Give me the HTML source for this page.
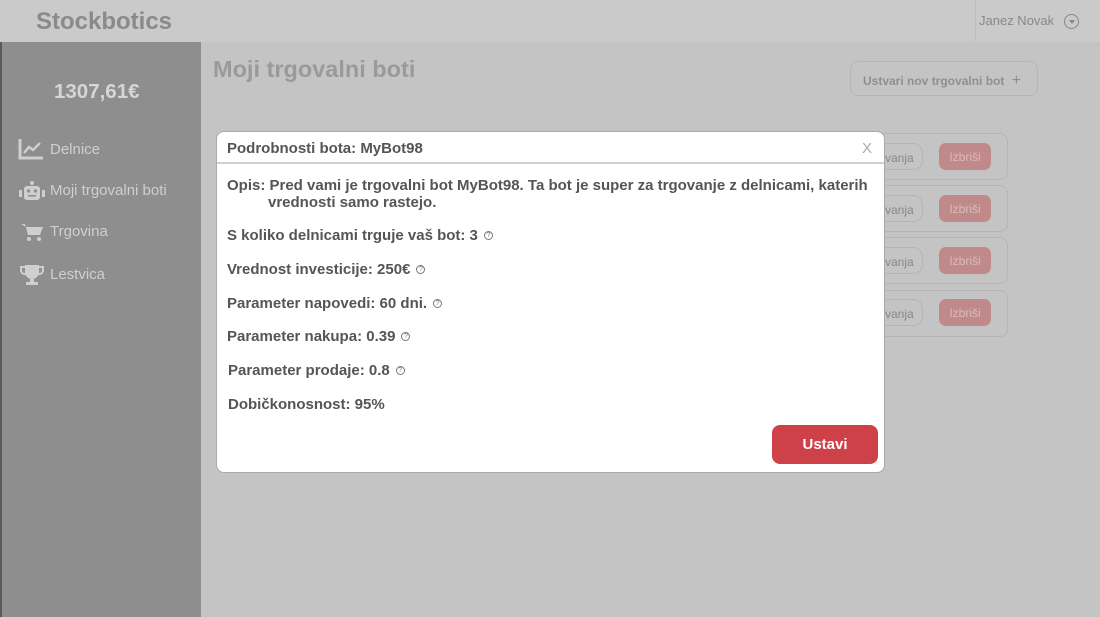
<!DOCTYPE html>
<html><head><meta charset="utf-8"><style>
*{margin:0;padding:0;box-sizing:border-box}
body{width:1100px;height:617px;overflow:hidden;background:#c4c4c4;font-family:"Liberation Sans",sans-serif;position:relative}
.abs{position:absolute}
.hdr{left:0;top:0;width:1100px;height:42px;background:#cacaca}
.logo{left:36px;top:8px;font-size:24px;font-weight:bold;color:#8a8a8a}
.user{left:979px;top:13px;font-size:13px;color:#888}
.side{left:0;top:42px;width:201px;height:575px;background:#8e8e8e;border-left:2px solid #5a5a5a}
.bal{left:54px;top:80px;font-size:20.5px;font-weight:bold;color:#d6d6d6}
.nav{left:50px;font-size:15px;color:#cfcfcf}
.ttl{left:213px;top:56px;font-size:23.5px;font-weight:bold;color:#9a9a9a}
.newb{left:850px;top:61px;width:188px;height:35px;border:1px solid #b5b5b5;border-radius:8px;font-size:12px;font-weight:bold;color:#8f8f8f;padding:10px 0 0 12px}
.card{left:868px;width:140px;height:47px;border:1px solid #b5b5b5;border-radius:8px}
.ob{left:868px;width:55px;height:27px;border:1px solid #b5b5b5;border-radius:10px;font-size:12px;color:#888;padding:7px 0 0 16px}
.iz{left:939px;width:52px;height:27px;background:#c08a8a;border-radius:7px;font-size:12px;color:#dcbcbc;text-align:center;padding-top:7px}
.modal{left:216px;top:131px;width:669px;height:342px;background:#fff;border-radius:8px;border:1px solid #aaa}
.mh{left:0;top:0;width:667px;height:32px;border-bottom:2px solid #cfcfcf}
.mt{color:#555;font-size:15px;font-weight:bold}
.q{display:inline-block;width:9px;height:9px;border:1px solid #777;border-radius:50%;font-size:7px;line-height:8px;text-align:center;color:#777;margin-left:6px;vertical-align:3px;font-weight:normal}
.btn{left:555px;top:293px;width:106px;height:39px;background:#cf4149;border-radius:8px;color:#fff;font-weight:bold;font-size:15px;text-align:center;padding-top:11px}
</style></head><body>
<div class="abs hdr"></div>
<div class="abs logo">Stockbotics</div>
<div class="abs" style="left:975px;top:0;width:1px;height:42px;background:#c0c0c0"></div>
<div class="abs user">Janez Novak</div>
<div class="abs" style="left:1064px;top:14px;width:15px;height:15px;border:1px solid #888;border-radius:50%"><div style="margin:5px auto 0;width:0;height:0;border-left:3px solid transparent;border-right:3px solid transparent;border-top:4px solid #888"></div></div>
<div class="abs side"></div>
<div class="abs bal">1307,61€</div>
<svg class="abs" style="left:18px;top:138px" width="26" height="22" viewBox="0 0 26 22"><path d="M2 1V20H25" stroke="#cfcfcf" stroke-width="3" fill="none"/><path d="M6 15L11 9L15 12L22 5" stroke="#cfcfcf" stroke-width="2.5" fill="none"/></svg>
<div class="abs nav" style="top:141px">Delnice</div>
<svg class="abs" style="left:18px;top:180px" width="28" height="22" viewBox="0 0 28 22"><rect x="6" y="6" width="16" height="14" rx="3" fill="#cfcfcf"/><rect x="1" y="10" width="3" height="7" fill="#cfcfcf"/><rect x="24" y="10" width="3" height="7" fill="#cfcfcf"/><circle cx="14" cy="3" r="2" fill="#cfcfcf"/><circle cx="10.5" cy="11" r="1.6" fill="#8e8e8e"/><circle cx="17.5" cy="11" r="1.6" fill="#8e8e8e"/><rect x="10" y="15" width="8" height="1.5" fill="#8e8e8e"/></svg>
<div class="abs nav" style="top:182px">Moji trgovalni boti</div>
<svg class="abs" style="left:20px;top:222px" width="24" height="20" viewBox="0 0 24 20"><path d="M1 2H5L8 13H20L23 5H6" fill="#cfcfcf"/><circle cx="9" cy="17" r="2" fill="#cfcfcf"/><circle cx="19" cy="17" r="2" fill="#cfcfcf"/></svg>
<div class="abs nav" style="top:223px">Trgovina</div>
<svg class="abs" style="left:20px;top:264px" width="24" height="22" viewBox="0 0 24 22"><path d="M5 1H19V8A7 7 0 0 1 5 8Z" fill="#cfcfcf"/><path d="M5 3H1V6A4 4 0 0 0 6 10M19 3H23V6A4 4 0 0 1 18 10" stroke="#cfcfcf" stroke-width="2" fill="none"/><rect x="10" y="14" width="4" height="4" fill="#cfcfcf"/><rect x="6" y="18" width="12" height="3" fill="#cfcfcf"/></svg>
<div class="abs nav" style="top:266px">Lestvica</div>
<div class="abs ttl">Moji trgovalni boti</div>
<div class="abs newb">Ustvari nov trgovalni bot <span style="font-size:16px;font-weight:normal;margin-left:4px">+</span></div>
<div class="abs card" style="top:133px"></div><div class="abs ob" style="top:143px">vanja</div><div class="abs iz" style="top:143px">Izbriši</div>
<div class="abs card" style="top:185px"></div><div class="abs ob" style="top:195px">vanja</div><div class="abs iz" style="top:195px">Izbriši</div>
<div class="abs card" style="top:237px"></div><div class="abs ob" style="top:247px">vanja</div><div class="abs iz" style="top:247px">Izbriši</div>
<div class="abs card" style="top:290px"></div><div class="abs ob" style="top:299px">vanja</div><div class="abs iz" style="top:299px">Izbriši</div>
<div class="abs modal">
<div class="abs mh"></div>
<div class="abs mt" style="left:10px;top:8px">Podrobnosti bota: MyBot98</div>
<div class="abs" style="left:645px;top:8px;font-size:15px;color:#aaa">X</div>
<div class="abs mt" style="left:10px;top:45px;width:660px;padding-left:41px;text-indent:-41px;line-height:17px">Opis: Pred vami je trgovalni bot MyBot98. Ta bot je super za trgovanje z delnicami, katerih vrednosti samo rastejo.</div>
<div class="abs mt" style="left:10px;top:95px">S koliko delnicami trguje vaš bot: 3<span class="q">?</span></div>
<div class="abs mt" style="left:10px;top:129px">Vrednost investicije: 250€<span class="q">?</span></div>
<div class="abs mt" style="left:10px;top:163px">Parameter napovedi: 60 dni.<span class="q">?</span></div>
<div class="abs mt" style="left:10px;top:196px">Parameter nakupa: 0.39<span class="q">?</span></div>
<div class="abs mt" style="left:11px;top:230px">Parameter prodaje: 0.8<span class="q">?</span></div>
<div class="abs mt" style="left:11px;top:264px">Dobičkonosnost: 95%</div>
<div class="abs btn">Ustavi</div>
</div>
</body></html>
